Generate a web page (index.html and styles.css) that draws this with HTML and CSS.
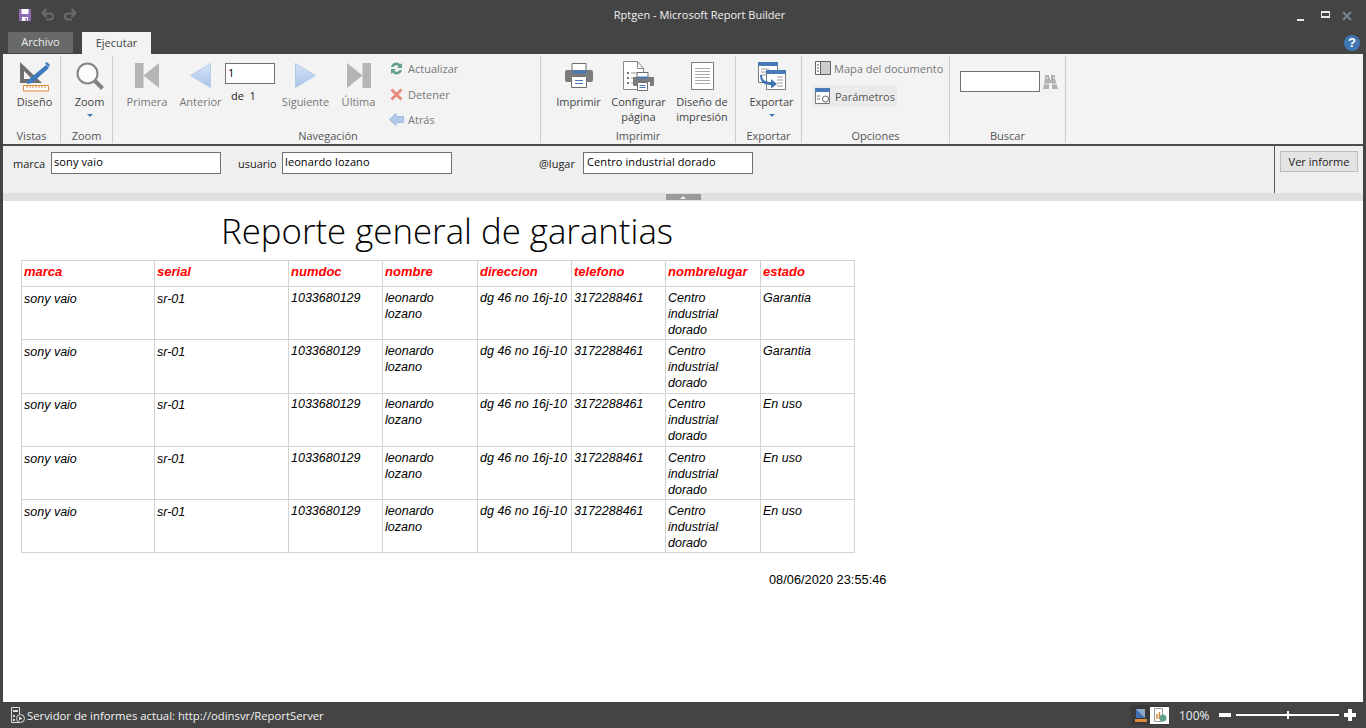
FILE: index.html
```html
<!DOCTYPE html>
<html lang="es">
<head>
<meta charset="utf-8">
<title>Rptgen - Microsoft Report Builder</title>
<link rel="stylesheet" href="styles.css">
</head>
<body>
<div class="window">
  <header class="titlebar">
    <div class="qat">
      <svg width="14" height="14" viewBox="0 0 14 14"><path d="M1 1h12v12H1z" fill="#8e6bb5"/><path d="M3.500 1h7v5h-7z" fill="#fff"/><path d="M4 9h6v4H4z" fill="#fff"/><path d="M7.500 10h1.500v3H7.500z" fill="#8e6bb5"/></svg>
      <svg class="qat-undo" width="15" height="14" viewBox="0 0 15 14"><path d="M4 7.500H10a3 3 0 0 1 0 6H6M6.500 3 2.500 7l4 4" transform="translate(0 -2)" fill="none" stroke="#6b6b6b" stroke-width="2"/></svg>
      <svg class="qat-redo" width="15" height="14" viewBox="0 0 15 14"><path d="M11 7.500H5a3 3 0 0 0 0 6h4M8.500 3l4 4-4 4" transform="translate(0 -2)" fill="none" stroke="#6b6b6b" stroke-width="2"/></svg>
    </div>
    <div class="title">Rptgen - Microsoft Report Builder</div>
    <div class="winctl">
      <span class="w-min"></span>
      <span class="w-max"></span>
      <svg width="10" height="10" viewBox="0 0 10 10"><path d="M1 1l8 8M9 1 1 9" stroke="#74808f" stroke-width="2.200"/></svg>
    </div>
  </header>
  <nav class="tabs">
    <div class="tab tab-file">Archivo</div>
    <div class="tab tab-active">Ejecutar</div>
    <div class="help">?</div>
  </nav>

  <section class="ribbon">
    <div class="group g-views">
      <div class="gbody">
        <div class="rb w-views">
          <div class="ico"><svg width="32" height="32" viewBox="0 0 32 32"><path fill-rule="evenodd" d="M1 2v21h22zM5 11v8h8z" fill="#6f6f6f"/><path d="M9 20 27 5l3 3-17 15-5 1z" fill="#3f79bd"/><path d="M26 3.500l2-1.500 3 3-1.500 2z" fill="#3f79bd"/><path d="M4.500 25.500h25v5.500h-25z" fill="#fff" stroke="#e08a3c"/><path d="M8 26v2M11 26v2M14 26v2M17 26v2M20 26v2M23 26v2M26 26v2" stroke="#e08a3c"/></svg></div>
          <span>Diseño</span>
        </div>
      </div>
      <div class="glabel">Vistas</div>
    </div>

    <div class="group g-zoom">
      <div class="gbody">
        <div class="rb w-zoom">
          <div class="ico"><svg width="28" height="28" viewBox="0 0 28 28"><circle cx="11.500" cy="11.500" r="10" fill="#fbfbfb" stroke="#858585" stroke-width="2"/><path d="M19 19l7.500 7.500" stroke="#808080" stroke-width="4"/></svg></div>
          <span>Zoom</span>
          <i class="caret"></i>
        </div>
      </div>
      <div class="glabel">Zoom</div>
    </div>

    <div class="group g-nav">
      <div class="gbody">
        <div class="rb off w-first">
          <div class="ico"><svg width="24" height="25" viewBox="0 0 24 25"><path d="M0 0h8.500v25H0zM24 0v25L8.500 12.500z" fill="#b5b5b5"/></svg></div>
          <span>Primera</span>
        </div>
        <div class="rb off w-prev">
          <div class="ico"><svg width="21" height="25" viewBox="0 0 21 25"><defs><linearGradient id="gp" x1="0" y1="0" x2="0" y2="1"><stop offset="0" stop-color="#d6e3f6"/><stop offset="1" stop-color="#a9c3e8"/></linearGradient></defs><path d="M20.500.5v24L.5 12.500z" fill="url(#gp)" stroke="#b7cbe8"/></svg></div>
          <span>Anterior</span>
        </div>
        <div class="pager">
          <input class="field f-page" type="text" value="1">
          <div class="pager-of">de&nbsp;&nbsp;1</div>
        </div>
        <div class="rb off w-next">
          <div class="ico"><svg width="21" height="25" viewBox="0 0 21 25"><path d="M.5.500v24l20-12z" fill="url(#gp)" stroke="#b7cbe8"/></svg></div>
          <span>Siguiente</span>
        </div>
        <div class="rb off w-last">
          <div class="ico"><svg width="24" height="25" viewBox="0 0 24 25"><path d="M24 0h-8.500v25H24zM0 0v25l15.500-12.500z" fill="#b5b5b5"/></svg></div>
          <span>Última</span>
        </div>
        <div class="smalls">
          <div class="sb">
            <svg width="15" height="15" viewBox="0 0 15 15"><path d="M2 6a5.500 5.500 0 0 1 9.500-2.500L13 2v5H8l1.800-1.800A3.300 3.300 0 0 0 4.500 6z" fill="#5fa08a"/><path d="M13 9a5.500 5.500 0 0 1-9.500 2.500L2 13V8h5l-1.800 1.800A3.300 3.300 0 0 0 10.500 9z" fill="#5fa08a"/></svg>
            <span>Actualizar</span>
          </div>
          <div class="sb">
            <svg width="15" height="15" viewBox="0 0 15 15"><path d="M2.500 2.500l10 10M12.500 2.500l-10 10" stroke="#ea8a7c" stroke-width="3"/></svg>
            <span>Detener</span>
          </div>
          <div class="sb">
            <svg width="15" height="15" viewBox="0 0 15 15"><path d="M7 1.500v3h7.500v6H7v3L.5 7.500z" fill="#b4caea" stroke="#9db8de"/></svg>
            <span>Atrás</span>
          </div>
        </div>
      </div>
      <div class="glabel">Navegación</div>
    </div>

    <div class="group g-print">
      <div class="gbody">
        <div class="rb w-print">
          <div class="ico"><svg width="28" height="25" viewBox="0 0 28 25"><path d="M7 .5h14v9H7z" fill="#fff" stroke="#6f6f6f"/><path d="M2 7h24a2 2 0 0 1 2 2v8a2 2 0 0 1-2 2h-4v-6H6v6H2a2 2 0 0 1-2-2V9a2 2 0 0 1 2-2z" fill="#7b7b7b"/><path d="M7 7.500h14v3H7z" fill="#4a7ab5"/><path d="M6.500 13.500h15v11h-15z" fill="#fff" stroke="#6f6f6f"/><path d="M10 17.500h8M10 20.500h8" stroke="#4a7ab5"/></svg></div>
          <span>Imprimir</span>
        </div>
        <div class="rb w-setup">
          <div class="ico"><svg width="31" height="30" viewBox="0 0 31 30"><path d="M.5.500h14l6 7v21H.5z" fill="#fff" stroke="#8a8a8a"/><path d="M14.500.5v7h6" fill="none" stroke="#8a8a8a"/><path d="M4 11h2v2H4zM4 16h2v2H4zM4 21h2v2H4z" fill="#777"/><path d="M8 12h6M8 17h3M8 22h3" stroke="#999"/><path d="M14 11.500h11v7H14z" fill="#fff" stroke="#6f6f6f"/><path d="M11 16h19a1 1 0 0 1 1 1v7a1 1 0 0 1-1 1h-3v-4H14v4h-3a1 1 0 0 1-1-1v-7a1 1 0 0 1 1-1z" fill="#7b7b7b"/><path d="M14 15.500h11v2H14z" fill="#4a7ab5"/><path d="M14.500 21.500h10v8h-10z" fill="#fff" stroke="#6f6f6f"/><path d="M16.500 24.500h6M16.500 26.500h6" stroke="#4a7ab5"/></svg></div>
          <span>Configurar<br>página</span>
        </div>
        <div class="rb w-layout">
          <div class="ico"><svg width="23" height="28" viewBox="0 0 23 28"><path d="M.5.500h22v27H.5z" fill="#fff" stroke="#7a7a7a"/><path d="M4 6.500h15M4 9.500h15M4 12.500h15M4 15.500h15M4 18.500h15M4 21.500h15" stroke="#a8a8a8"/></svg></div>
          <span>Diseño de<br>impresión</span>
        </div>
      </div>
      <div class="glabel">Imprimir</div>
    </div>

    <div class="group g-export">
      <div class="gbody">
        <div class="rb w-export">
          <div class="ico"><svg width="28" height="28" viewBox="0 0 28 28"><path d="M.5.500h19v20H.5z" fill="#fff" stroke="#7a7a7a"/><path d="M0 0h20v4H0z" fill="#4a7ab5"/><path d="M3 7h8M3 10h8M3 13h5" stroke="#999"/><path d="M8.500 8.500h19v19h-19z" fill="#fff" stroke="#7a7a7a"/><path d="M8 8h20v4H8z" fill="#4a7ab5"/><path d="M19 15h6M19 18h6M19 21h6M19 24h6" stroke="#999"/><path d="M4 15c0 5 3 7 9 7v-3l6 5-6 4.500V25c-7 0-11-3-11-10z" transform="translate(0 -2)" fill="#3f72b0"/></svg></div>
          <span>Exportar</span>
          <i class="caret"></i>
        </div>
      </div>
      <div class="glabel">Exportar</div>
    </div>

    <div class="group g-options">
      <div class="gbody gbody-col">
        <div class="opt off">
          <svg width="16" height="14" viewBox="0 0 16 14"><path d="M.5.500h15v13H.5z" fill="#ccc" stroke="#666"/><path d="M.5.500h5v13h-5z" fill="#fff" stroke="#666"/><path d="M2 4h2M2 7h2M2 10h2" stroke="#555"/></svg>
          <span>Mapa del documento</span>
        </div>
        <div class="opt opt-active">
          <svg width="15" height="16" viewBox="0 0 15 16"><path d="M.5.500h14v15H.5z" fill="#fff" stroke="#777"/><path d="M0 0h15v4H0z" fill="#4a7ab5"/><path d="M2 8h3M2 11h3" stroke="#666"/><circle cx="10.500" cy="11" r="3" fill="none" stroke="#666"/></svg>
          <span>Parámetros</span>
        </div>
      </div>
      <div class="glabel">Opciones</div>
    </div>

    <div class="group g-search">
      <div class="gbody">
        <input class="field f-search" type="text">
        <svg class="binoc" width="15" height="14" viewBox="0 0 15 14"><path d="M2 0h4v3h1v2h1V3h-.001V0h4v4l3 10H9V8H6v6H0l2-10z" fill="#b0b0b0"/><path d="M1.500 9h4M9.500 9h4M3 3h2M10 3h2" stroke="#f3f3f3"/></svg>
      </div>
      <div class="glabel">Buscar</div>
    </div>
  </section>

  <section class="params">
    <div class="param p-marca"><label>marca</label><input class="field f-param" type="text" value="sony vaio"></div>
    <div class="param p-usuario"><label>usuario</label><input class="field f-param" type="text" value="leonardo lozano"></div>
    <div class="param p-lugar"><label>@lugar</label><input class="field f-param" type="text" value="Centro industrial dorado"></div>
    <div class="run"><button class="run-btn" type="button">Ver informe</button></div>
  </section>

  <div class="splitter"><div class="grip"><i></i></div></div>

  <main class="report">
    <h1>Reporte general de garantias</h1>
    <table>
      <thead>
        <tr>
          <th class="c1">marca</th><th class="c2">serial</th><th class="c3">numdoc</th><th class="c4">nombre</th><th class="c5">direccion</th><th class="c6">telefono</th><th class="c7">nombrelugar</th><th class="c8">estado</th>
        </tr>
      </thead>
      <tbody>
        <tr><td class="low">sony vaio</td><td class="low">sr-01</td><td>1033680129</td><td>leonardo<br>lozano</td><td class="nw">dg 46 no 16j-10</td><td>3172288461</td><td>Centro<br>industrial<br>dorado</td><td>Garantia</td></tr>
        <tr class="tall"><td class="low">sony vaio</td><td class="low">sr-01</td><td>1033680129</td><td>leonardo<br>lozano</td><td class="nw">dg 46 no 16j-10</td><td>3172288461</td><td>Centro<br>industrial<br>dorado</td><td>Garantia</td></tr>
        <tr class="raised"><td class="low">sony vaio</td><td class="low">sr-01</td><td>1033680129</td><td>leonardo<br>lozano</td><td class="nw">dg 46 no 16j-10</td><td>3172288461</td><td>Centro<br>industrial<br>dorado</td><td>En uso</td></tr>
        <tr><td class="low">sony vaio</td><td class="low">sr-01</td><td>1033680129</td><td>leonardo<br>lozano</td><td class="nw">dg 46 no 16j-10</td><td>3172288461</td><td>Centro<br>industrial<br>dorado</td><td>En uso</td></tr>
        <tr><td class="low">sony vaio</td><td class="low">sr-01</td><td>1033680129</td><td>leonardo<br>lozano</td><td class="nw">dg 46 no 16j-10</td><td>3172288461</td><td>Centro<br>industrial<br>dorado</td><td>En uso</td></tr>
      </tbody>
    </table>
    <div class="stamp">08/06/2020 23:55:46</div>
  </main>

  <footer class="status">
    <svg class="st-ico" width="15" height="16" viewBox="0 0 15 16"><path d="M1.500.5h8v15h-8z" fill="none" stroke="#ddd"/><path d="M3 3h5v2H3zM3 8h2v2H3zM3 12h2v2H3z" fill="#ddd"/><circle cx="10.500" cy="11.500" r="4" fill="#444" stroke="#ddd"/><path d="M9 9.500l3.500 2-3.500 2z" fill="#ddd"/></svg>
    <span class="st-text">Servidor de informes actual: http://odinsvr/ReportServer</span>
    <div class="st-right">
      <div class="views">
        <span class="v-btn"><svg width="12" height="13" viewBox="0 0 12 13"><path d="M1 0h9v9H1z" fill="#8fa9c9"/><path d="M1 0l9 9H1z" fill="#3f6fae"/><path d="M0 10h12v3H0z" fill="#e08a3c"/></svg></span>
        <span class="v-btn v-on"><svg width="14" height="14" viewBox="0 0 14 14"><path d="M1.500.5h8v13h-8z" fill="#fff" stroke="#999"/><path d="M4 6v5M6.500 4v7" stroke="#e08a3c" stroke-width="1.500"/><circle cx="10" cy="10" r="3.500" fill="#5fa08a"/></svg></span>
      </div>
      <span class="pct">100%</span>
      <span class="z-minus"></span>
      <span class="z-track"><i></i></span>
      <span class="z-plus"></span>
    </div>
  </footer>
</div>
</body>
</html>
```

FILE: styles.css
```css
* { box-sizing: border-box; }
html, body { margin: 0; height: 100%; overflow: hidden; }
body { background: #444; font-family: "Open Sans", "Noto Sans", sans-serif; font-size: 11px; color: #444; }
.window { height: 728px; width: 1366px; display: flex; flex-direction: column; background: #444; }

/* title bar */
.titlebar { height: 30px; flex: none; display: flex; align-items: center; color: #fff; }
.qat { width: 400px; padding-left: 18px; display: flex; align-items: center; margin-top: -1px; }
.qat-undo { margin-left: 8px; }
.qat-redo { margin-left: 8px; }
.title { flex: 1; text-align: center; font-size: 11px; color: #f2f2f2; margin-top: -1px; }
.winctl { width: 367px; display: flex; align-items: center; padding-left: 298px; }
.w-min { width: 7px; height: 2px; background: #e8e8e8; margin-top: 9px; }
.w-max { width: 9px; height: 7px; border: 1px solid #e8e8e8; border-top-width: 2px; border-bottom-width: 2px; margin-left: 17px; margin-top: -1px; }
.winctl svg { margin-left: 12px; margin-top: 1px; }

.tabs { height: 24px; flex: none; display: flex; align-items: flex-start; padding: 2px 6px 0 8px; }
.tab { text-align: center; font-size: 11px; }
.tab-file { width: 65px; height: 21px; background: #696969; color: #eee; line-height: 19px; }
.tab-active { width: 69px; height: 22px; margin-left: 9px; background: #f3f3f3; color: #444; line-height: 22px; }
.help { margin-left: auto; width: 16px; height: 16px; border-radius: 50%; background: #3f76b3; color: #fff; font: bold 13px/16px "Liberation Sans", sans-serif; text-align: center; margin-top: 3px; }

/* ribbon */
.ribbon { height: 90px; flex: none; margin: 0 3px; background: #f3f3f3; display: flex; align-items: flex-start; }
.group { height: 87px; margin-top: 2px; border-right: 1px solid #ccc; display: flex; flex-direction: column; flex: none; }
.gbody { flex: 1; display: flex; align-items: flex-start; min-height: 0; }
.gbody-col { flex-direction: column; }
.glabel { height: 16px; line-height: 16px; padding-top: 1px; text-align: center; color: #555; font-size: 11px; }
.g-views { width: 58px; }
.g-views .gbody { padding-left: 14px; }
.g-zoom { width: 52px; }
.g-zoom .gbody { padding-left: 14px; }
.g-nav { width: 428px; }
.g-nav .gbody { padding-left: 15px; }
.g-nav .glabel { padding-left: 3px; }
.g-print { width: 195px; }
.g-print .gbody { padding-left: 16px; }
.g-export { width: 66px; }
.g-export .gbody { padding-left: 14px; }
.g-options { width: 148px; }
.g-options .gbody { padding-left: 10px; }
.g-search { width: 116px; }
.g-search .gbody { padding-left: 10px; }

.rb { flex: none; display: flex; flex-direction: column; align-items: center; text-align: center; line-height: 15px; color: #444; font-size: 11px; white-space: nowrap; }
.off { color: #777; }
.ico { height: 39px; margin-bottom: -1px; display: flex; align-items: center; justify-content: center; }
.caret { width: 0; height: 0; border: 3px solid transparent; border-top: 3px solid #4a7ab5; border-bottom: 0; margin-top: 5px; }
.w-views { width: 35px; }
.w-zoom { width: 29px; }
.w-first { width: 38px; }
.w-prev { width: 41px; margin-left: 14px; }
.w-next { width: 47px; margin-left: 7px; }
.w-last { width: 33px; margin-left: 13px; }
.w-print { width: 43px; }
.w-setup { width: 55px; margin-left: 11px; }
.w-layout { width: 52px; margin-left: 10px; }
.w-export { width: 43px; }

.pager { margin-left: 4px; padding-top: 7px; width: 50px; }
.field { display: block; border: 1px solid #707070; background: #fff; font: 11px "Open Sans", "Noto Sans", sans-serif; letter-spacing: .1px; color: #000; padding: 0 0 2px 2px; border-radius: 0; outline: 0; }
.f-page { width: 50px; height: 21px; }
.pager-of { color: #222; font-size: 11px; line-height: 15px; padding: 4px 0 0 6px; }

.smalls { margin-left: 14px; display: flex; flex-direction: column; }
.sb { height: 25.500px; display: flex; align-items: center; gap: 4px; color: #777; font-size: 11px; }

.opt { display: flex; align-items: center; height: 22px; font-size: 11px; gap: 3px; padding-left: 3px; white-space: nowrap; }
.opt:first-child { margin-top: 1px; }
.opt-active { width: 85px; margin-top: 6px; background: #ebebeb; color: #555; gap: 5px; }
.f-search { width: 80px; height: 21px; margin-top: 15px; }
.binoc { margin: 19px 0 0 3px; }

/* parameters */
.params { height: 49px; flex: none; margin: 0 3px; border-top: 2px solid #4d4d4d; background: #efefef; display: flex; align-items: flex-start; color: #222; font-size: 11px; }
.param { display: flex; align-items: center; height: 22px; margin-top: 6px; }
.param label { white-space: nowrap; }
.p-marca label { width: 31px; }
.p-usuario label { width: 37px; }
.p-lugar label { width: 37px; }
.f-param { width: 170px; height: 22px; margin-left: 7px; padding-left: 2px; padding-bottom: 3px; }
.p-lugar .f-param { padding-left: 3px; }
.p-marca { margin-left: 10px; }
.p-usuario { margin-left: 17px; }
.p-lugar { margin-left: 87px; }
.run { margin-left: auto; width: 89px; height: 47px; border-left: 1px solid #555; padding: 5px 0 0 5px; }
.run-btn { width: 78px; height: 21px; border: 1px solid #bbb; background: #e3e3e3; font: 11px "Open Sans", "Noto Sans", sans-serif; color: #222; padding: 0; }

.splitter { height: 8px; flex: none; margin: 0 3px; background: #e0e0e0; display: flex; justify-content: center; }
.grip { width: 35px; height: 6px; margin-top: 1px; background: #9a9a9a; display: flex; justify-content: center; align-items: center; }
.grip i { width: 0; height: 0; border: 3px solid transparent; border-bottom: 3px solid #eee; border-top: 0; }

/* report */
.report { flex: 1; min-height: 0; margin: 0 3px; background: #fff; color: #000; overflow: hidden; padding-left: 18px; }
.report h1 { margin: 8px 0 8px 200px; font: 300 34.800px/43px "Open Sans", "Noto Sans", sans-serif; color: #000; white-space: nowrap; }
table { border-collapse: collapse; table-layout: fixed; width: 833px; font: italic 12.500px/16px "Liberation Sans", Arial, sans-serif; }
th, td { border: 1px solid #d3d3d3; padding: 3px 0 0 2px; vertical-align: top; text-align: left; }
th { color: #f00; font-weight: bold; font-size: 13px; height: 26px; }
td { height: 53px; }
.tall td { height: 54px; }
td.low { padding-top: 4px; }
.raised td { padding-top: 2px; }
.raised td.low { padding-top: 3px; }
.nw { white-space: nowrap; }
.c1 { width: 133px; } .c2 { width: 134px; } .c3 { width: 94px; } .c4 { width: 95px; }
.c5 { width: 94px; } .c6 { width: 94px; } .c7 { width: 95px; } .c8 { width: 94px; }
.stamp { margin: 19px 0 0 748px; font: 12.800px/16px "Liberation Sans", Arial, sans-serif; color: #000; }

/* status */
.status { height: 26px; flex: none; display: flex; align-items: center; color: #f2f2f2; padding-left: 10px; font-size: 11.300px; }
.st-ico { flex: none; }
.st-text { margin-left: 2px; }
.st-right { margin-left: auto; display: flex; align-items: center; padding-right: 10px; }
.views { display: flex; align-items: center; height: 20px; background: #3a3a3a; }
.v-btn { width: 19px; height: 17px; display: flex; align-items: center; justify-content: center; }
.v-on { background: #fff; }
.pct { margin-left: 10px; font-size: 12px; color: #e8eef5; width: 30px; }
.z-minus { margin-left: 10px; width: 12px; height: 4px; background: #fff; }
.z-track { margin-left: 5px; width: 103px; height: 2px; background: #fff; position: relative; }
.z-track i { position: absolute; left: 51px; top: -3px; width: 2px; height: 8px; background: #fff; }
.z-plus { margin-left: 5px; width: 12px; height: 12px; background: linear-gradient(#fff, #fff) center/12px 4px no-repeat, linear-gradient(#fff, #fff) center/4px 12px no-repeat; }
```
